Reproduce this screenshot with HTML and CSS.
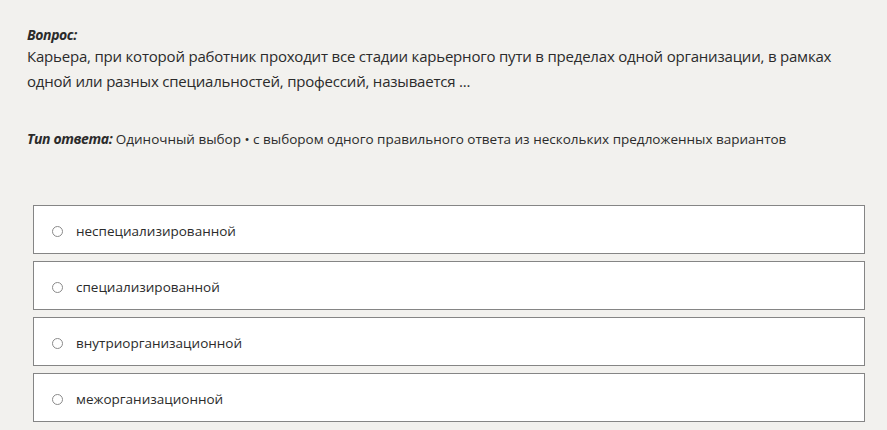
FILE: index.html
```html
<!DOCTYPE html>
<html lang="ru">
<head>
<meta charset="utf-8">
<link rel="stylesheet" href="styles.css">
</head>
<body>
<div class="page">
  <div class="question">
    <div class="label">Вопрос:</div>
    <div class="text">Карьера, при которой работник проходит все стадии карьерного пути в пределах одной организации, в рамках одной или разных специальностей, профессий, называется ...</div>
  </div>
  <div class="type"><span class="label">Тип ответа:</span> Одиночный выбор • с выбором одного правильного ответа из нескольких предложенных вариантов</div>
  <div class="options">
    <label class="option"><span class="radio"></span><span>неспециализированной</span></label>
    <label class="option"><span class="radio"></span><span>специализированной</span></label>
    <label class="option"><span class="radio"></span><span>внутриорганизационной</span></label>
    <label class="option"><span class="radio"></span><span>межорганизационной</span></label>
  </div>
</div>
</body>
</html>
```
FILE: styles.css
```css
html, body {
  margin: 0;
  padding: 0;
  background: #f2f1ee;
}
body {
  font-family: "Open Sans", "Noto Sans", sans-serif;
  color: #2b2b2b;
}
.page {
  padding: 26px 22px 0 27px;
}
.label {
  font-weight: 700;
  font-style: italic;
  font-size: 14px;
  letter-spacing: -0.4px;
}
.question .label {
  line-height: 18px;
}
.question .text {
  font-size: 15px;
  line-height: 25px;
  letter-spacing: -0.2px;
}
.type {
  margin-top: 35px;
  font-size: 13.5px;
  line-height: 20px;
  letter-spacing: 0;
}
.options {
  margin-top: 56px;
  margin-left: 6px;
  display: flex;
  flex-direction: column;
  gap: 7px;
}
.option {
  display: flex;
  align-items: center;
  height: 44px;
  padding-top: 3px;
  background: #fff;
  border: 1px solid #858585;
  padding-left: 18px;
  font-size: 13.5px;
  gap: 13px;
}
.radio {
  width: 9px;
  height: 9px;
  border: 1px solid #8a8a8a;
  border-radius: 50%;
  background: #fff;
}
```
